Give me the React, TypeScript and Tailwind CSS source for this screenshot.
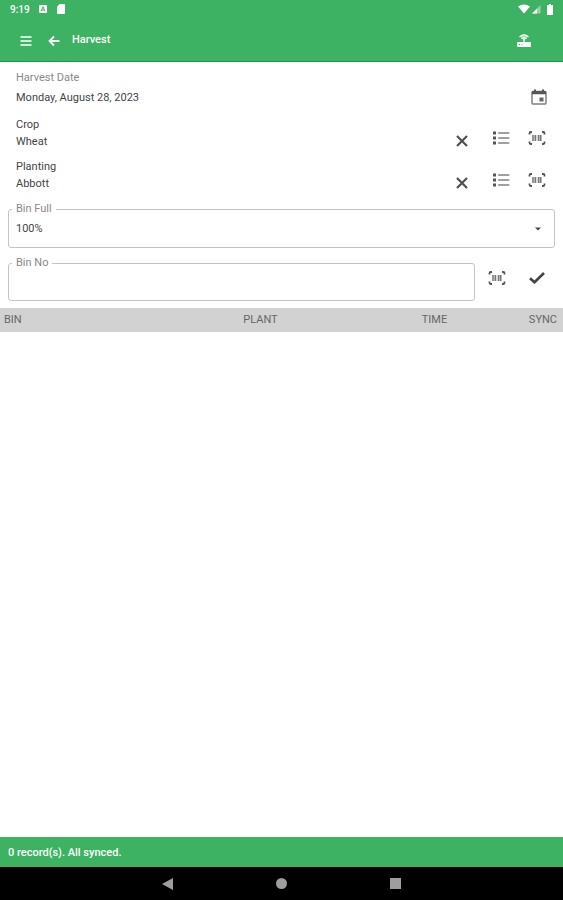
import { useState, type ReactNode } from "react";

function IconButton({ label, className, children }: { label: string; className: string; children: ReactNode }) {
  return (
    <button type="button" aria-label={label} className={`flex shrink-0 items-center justify-center ${className}`}>
      {children}
    </button>
  );
}

function ScanIcon() {
  return (
    <svg viewBox="0 0 18 16" className="h-4 w-[18px]" fill="none" aria-hidden="true">
      <path d="M1.500 4.500V3.200q0-1.200 1.200-1.200H4M14 2h1.300q1.200 0 1.200 1.200v1.300M16.500 11.500v1.300q0 1.200-1.200 1.200H14M4 14H2.700q-1.200 0-1.200-1.200v-1.300" stroke="#555" strokeWidth="1.800" />
      <path d="M4 5h4.500v6H4zM9.500 5H14v6H9.500z" fill="#b5b5b5" />
      <path d="M5 5v6M7.500 5v6M10.500 5v6M12.500 5v6" stroke="#777" />
    </svg>
  );
}

function ListIcon() {
  return (
    <svg viewBox="0 0 18 16" className="h-4 w-[18px]" aria-hidden="true">
      <path d="M1 1.500h3v3H1zM1 6.500h3v3H1zM1 11.500h3v3H1z" fill="#555" />
      <path d="M7 3H16.500M7 8H16.500M7 13H16.500" stroke="#a0a0a0" strokeWidth="2.200" strokeLinecap="round" />
    </svg>
  );
}

function CloseIcon() {
  return (
    <svg viewBox="0 0 12 12" className="h-3 w-3" aria-hidden="true">
      <path d="M1 1l10 10M11 1L1 11" stroke="#505050" strokeWidth="2.200" />
    </svg>
  );
}

function PickerRow({ label, value }: { label: string; value: string }) {
  return (
    <div className="flex items-end pr-3.5 pl-4">
      <div className="flex-1 leading-[17px]">
        <div>{label}</div>
        <div>{value}</div>
      </div>
      <IconButton label={`Clear ${label}`} className="mr-[15px] h-[18px] w-6">
        <CloseIcon />
      </IconButton>
      <IconButton label={`Choose ${label}`} className="mr-3 h-6 w-6">
        <ListIcon />
      </IconButton>
      <IconButton label={`Scan ${label}`} className="h-6 w-6">
        <ScanIcon />
      </IconButton>
    </div>
  );
}

function StatusBar() {
  return (
    <div className="flex h-[18px] items-center pr-2 pl-2.5 text-[10px] font-medium">
      <span className="w-[28px]">9:19</span>
      <svg viewBox="0 0 10 10" className="h-2.5 w-2.5" aria-hidden="true">
        <rect x="1" y="1" width="8" height="8" rx="1" fill="#fff" />
        <path d="M3 7.300l2-4.600 2 4.600M3.700 6h2.600" stroke="#3cb262" fill="none" />
      </svg>
      <svg viewBox="0 0 10 10" className="ml-2 h-2.5 w-2.5" aria-hidden="true">
        <path d="M3.500 0H8q1 0 1 1v8q0 1-1 1H2q-1 0-1-1V2.800z" fill="#fff" />
      </svg>
      <svg viewBox="0 0 12 10" className="ml-auto h-2.5 w-3" aria-hidden="true">
        <path d="M0 2.500Q6-1.500 12 2.500L6 9.500z" fill="#fff" />
      </svg>
      <svg viewBox="0 0 10 10" className="ml-px h-2.5 w-2.5" aria-hidden="true">
        <path d="M9.500 1v8.500H1z" fill="#fff" opacity=".45" />
        <path d="M6 4.700v4.800H1z" fill="#fff" />
      </svg>
      <svg viewBox="0 0 6 11" className="mr-0.5 ml-1.5 h-[11px] w-1.5" aria-hidden="true">
        <path d="M2 0h2v1h2v10H0V1h2z" fill="#fff" />
      </svg>
    </div>
  );
}

function AppBar() {
  return (
    <div className="flex h-[43px] items-center pt-0.5 pr-[27px] pl-3.5">
      <IconButton label="Menu" className="h-6 w-6">
        <svg viewBox="0 0 12 12" className="h-3 w-3" aria-hidden="true">
          <path d="M.5 2h11M.5 6h11M.5 10h11" stroke="#fff" strokeWidth="1.700" />
        </svg>
      </IconButton>
      <IconButton label="Back" className="ml-1 h-6 w-6">
        <svg viewBox="0 0 12 12" className="h-3 w-3" fill="none" aria-hidden="true">
          <path d="M11.500 6H2M6 1.500L1.500 6 6 10.500" stroke="#fff" strokeWidth="1.800" />
        </svg>
      </IconButton>
      <h1 className="ml-1.5 flex-1 text-[11px] font-medium">Harvest</h1>
      <IconButton label="Connection" className="h-6 w-6">
        <svg viewBox="0 0 14 13" className="h-[13px] w-3.5" aria-hidden="true">
          <path d="M3 2.600Q7-1.200 11 2.600L7 6.500z" fill="#a5dcb7" />
          <path d="M2.500 3Q7-1.200 11.500 3M4.500 4.800q2.500-2 5 0" stroke="#fff" strokeWidth="1.300" fill="none" />
          <path d="M6.300 4.500h1.400V8H13q1 0 1 1v3q0 1-1 1H1q-1 0-1-1V9q0-1 1-1h5.300z" fill="#fff" />
          <path d="M2 10.500h1M4.500 10.500h1" stroke="#3cb262" />
        </svg>
      </IconButton>
    </div>
  );
}

export default function App() {
  const [binFull, setBinFull] = useState("100%");
  const [binNo, setBinNo] = useState("");

  return (
    <div className="flex min-h-screen flex-col bg-white font-[Roboto,'Liberation_Sans',sans-serif] text-[11px] text-[#444]">
      <header className="border-b border-[#0f9f42] bg-[#3cb262] text-white">
        <StatusBar />
        <AppBar />
      </header>

      <main className="flex-1 pt-1.5">
        <div className="flex flex-col gap-2">
          <div className="flex items-end pr-3 pl-4">
            <div className="flex-1 leading-5">
              <div className="text-[#888]">Harvest Date</div>
              <div>Monday, August 28, 2023</div>
            </div>
            <IconButton label="Pick date" className="h-[22px] w-6">
              <svg viewBox="0 0 16 16" className="h-4 w-4" aria-hidden="true">
                <rect x="1" y="2.500" width="14" height="12.500" rx="1" fill="none" stroke="#808080" strokeWidth="1.500" />
                <path d="M1 2h14v3.200H1zM3 .5h2V3H3zM11 .5h2V3h-2z" fill="#555" />
                <path d="M8.500 8.500h4v4h-4z" fill="#666" />
              </svg>
            </IconButton>
          </div>
          <PickerRow label="Crop" value="Wheat" />
          <PickerRow label="Planting" value="Abbott" />
        </div>

        <div className="mt-2 px-2">
          <fieldset className="rounded-[3px] border border-[#c4c4c4] px-[3px]">
            <legend className="px-1 leading-[18px] text-[#888]">
              <label htmlFor="bin-full">Bin Full</label>
            </legend>
            <div className="flex h-[29px] items-start">
              <select
                id="bin-full"
                value={binFull}
                onChange={(e) => setBinFull(e.target.value)}
                className="h-[22px] flex-1 appearance-none bg-transparent px-1 outline-none"
              >
                <option>100%</option>
                <option>75%</option>
                <option>50%</option>
                <option>25%</option>
              </select>
              <svg viewBox="0 0 6 22" className="pointer-events-none mr-2.5 h-[22px] w-1.5" aria-hidden="true">
                <path d="M0 9.500h6l-3 3z" fill="#444" />
              </svg>
            </div>
          </fieldset>
        </div>

        <div className="mt-1.5 flex items-center pr-3.5 pl-2">
          <fieldset className="min-w-0 flex-1 rounded-[3px] border border-[#c4c4c4] px-[3px]">
            <legend className="px-1 leading-[18px] text-[#888]">
              <label htmlFor="bin-no">Bin No</label>
            </legend>
            <input
              id="bin-no"
              value={binNo}
              onChange={(e) => setBinNo(e.target.value)}
              className="block h-7 w-full px-1 pb-1.5 outline-none"
            />
          </fieldset>
          <IconButton label="Scan bin" className="ml-2.5 h-6 w-6">
            <ScanIcon />
          </IconButton>
          <IconButton label="Confirm bin" className="ml-4 h-6 w-6">
            <svg viewBox="0 0 16 12" className="h-3 w-4" fill="none" aria-hidden="true">
              <path d="M1 6.300l4.500 4L15 1" stroke="#444" strokeWidth="2.600" />
            </svg>
          </IconButton>
        </div>

        <table className="mt-[7px] w-full table-fixed">
          <thead>
            <tr className="h-6 bg-[#d2d2d2] text-left text-[#666]">
              <th className="w-[42.5%] px-1 font-normal">BIN</th>
              <th className="w-[31.7%] px-1 font-normal">PLANT</th>
              <th className="px-1 font-normal">TIME</th>
              <th className="px-1.5 text-right font-normal">SYNC</th>
            </tr>
          </thead>
          <tbody />
        </table>
      </main>

      <footer>
        <div className="flex h-[30px] items-center bg-[#3cb262] px-2 pt-0.5 font-medium text-white">0 record(s). All synced.</div>
        <nav className="flex h-[33px] items-center justify-center gap-[90px] bg-black">
          <IconButton label="System back" className="h-6 w-6">
            <svg viewBox="0 0 12 12" className="h-3 w-3" aria-hidden="true">
              <path d="M11 0v12L0 6z" fill="#9e9e9e" />
            </svg>
          </IconButton>
          <IconButton label="Home" className="h-6 w-6">
            <span className="h-[11px] w-[11px] rounded-full bg-[#9e9e9e]" />
          </IconButton>
          <IconButton label="Recent apps" className="h-6 w-6">
            <span className="h-[11px] w-[11px] bg-[#9e9e9e]" />
          </IconButton>
        </nav>
      </footer>
    </div>
  );
}
